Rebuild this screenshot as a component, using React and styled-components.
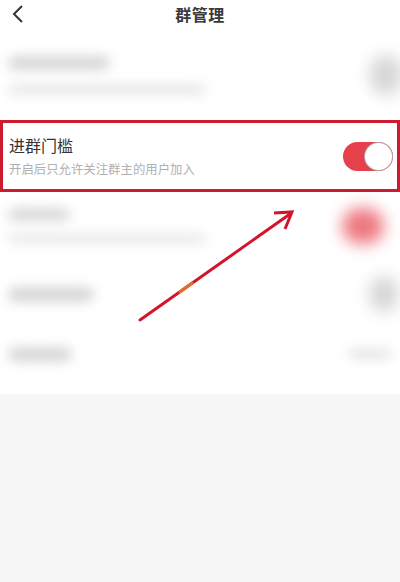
import React from "react";
import styled, { createGlobalStyle } from "styled-components";

const GlobalStyle = createGlobalStyle`
  html, body {
    margin: 0;
    padding: 0;
    background: #f7f7f7;
    font-family: "Noto Sans CJK SC", "Noto Sans", sans-serif;
  }
`;

const Page = styled.div`
  position: relative;
  width: 400px;
  height: 582px;
  overflow: hidden;
  background: #f7f7f7;
  display: flex;
  flex-direction: column;
`;

const Sheet = styled.div`
  background: #fff;
  display: flex;
  flex-direction: column;
  padding-bottom: 14px;
`;

const Header = styled.div`
  position: relative;
  height: 30px;
  display: flex;
  align-items: center;
  justify-content: center;
`;

const Back = styled.div`
  position: absolute;
  left: 10px;
  top: 4px;
  width: 18px;
  height: 20px;
`;

const Title = styled.div`
  font-size: 16px;
  font-weight: 700;
  color: #3a3a3a;
  letter-spacing: 0.5px;
  margin-top: -2px;
`;

const Row = styled.div`
  height: ${(p) => p.h}px;
  display: flex;
  align-items: center;
  justify-content: space-between;
  padding: 0 ${(p) => (p.marked ? 4 : 8)}px 0 ${(p) => (p.marked ? 6 : 8)}px;
  box-sizing: border-box;
  border: ${(p) => (p.marked ? "3px solid #cc1b2e" : "none")};
`;

const Texts = styled.div`
  display: flex;
  flex-direction: column;
  gap: ${(p) => p.gap || 8}px;
`;

const Label = styled.div`
  font-size: 16px;
  color: #333;
  line-height: 20px;
`;

const Hint = styled.div`
  font-size: 12.4px;
  color: #b0b0b0;
  line-height: 16px;
`;

const Smudge = styled.div`
  width: ${(p) => p.w}px;
  height: ${(p) => p.hh || 12}px;
  border-radius: 8px;
  background: ${(p) => p.c || "#d4d4d4"};
  filter: blur(${(p) => p.b || 6}px);
`;

const KnobSmudge = styled.div`
  width: ${(p) => p.w}px;
  height: ${(p) => p.hh}px;
  border-radius: 20px;
  background: ${(p) => p.c};
  filter: blur(${(p) => p.b || 8}px);
  margin-right: ${(p) => p.mr || 0}px;
`;

const Toggle = styled.div`
  width: 50px;
  height: 29px;
  border-radius: 15px;
  background: #e5404b;
  display: flex;
  align-items: center;
  justify-content: flex-end;
  padding: 1px;
  box-sizing: border-box;
`;

const Knob = styled.div`
  width: 27px;
  height: 27px;
  border-radius: 50%;
  background: #fff;
  box-shadow: 0 0 0 1px #b9a3a8;
`;

const ArrowLayer = styled.svg`
  position: absolute;
  left: 0;
  top: 0;
  pointer-events: none;
`;

export default function App() {
  return (
    <Page>
      <GlobalStyle />
      <Sheet>
        <Header>
          <Back>
            <svg width="18" height="20" viewBox="0 0 18 20">
              <path d="M12 2 L4 10 L12 18" fill="none" stroke="#333" strokeWidth="2" />
            </svg>
          </Back>
          <Title>群管理</Title>
        </Header>

        <Row h={90}>
          <Texts gap={14}>
            <Smudge w={102} hh={14} c="#d6d6d6" />
            <Smudge w={198} hh={11} c="#e8e8e8" />
          </Texts>
          <KnobSmudge w={32} hh={40} c="#d6d6d6" mr={-10} />
        </Row>

        <Row h={72} marked>
          <Texts gap={6}>
            <Label>进群门槛</Label>
            <Hint>开启后只允许关注群主的用户加入</Hint>
          </Texts>
          <Toggle>
            <Knob />
          </Toggle>
        </Row>

        <Row h={68}>
          <Texts gap={12}>
            <Smudge w={62} hh={13} c="#d8d8d8" />
            <Smudge w={198} hh={11} c="#ebebeb" />
          </Texts>
          <KnobSmudge w={42} hh={36} c="#ee7880" mr={8} />
        </Row>

        <Row h={68}>
          <Texts>
            <Smudge w={86} hh={15} c="#d6d6d6" />
          </Texts>
          <KnobSmudge w={28} hh={36} c="#d6d6d6" mr={-6} />
        </Row>

        <Row h={52}>
          <Texts>
            <Smudge w={64} hh={15} c="#d8d8d8" />
          </Texts>
          <Smudge w={44} hh={10} c="#e4e4e4" />
        </Row>
      </Sheet>

      <ArrowLayer width="400" height="582" viewBox="0 0 400 582">
        <line x1="140" y1="320" x2="290" y2="214" stroke="#d3142b" strokeWidth="3" strokeLinecap="round" />
        <line x1="180" y1="292" x2="192" y2="283" stroke="#e0702e" strokeWidth="3" strokeLinecap="round" />
        <path d="M274 213 L292 212 L285 229" fill="none" stroke="#d3142b" strokeWidth="3" strokeLinejoin="miter" />
      </ArrowLayer>
    </Page>
  );
}
